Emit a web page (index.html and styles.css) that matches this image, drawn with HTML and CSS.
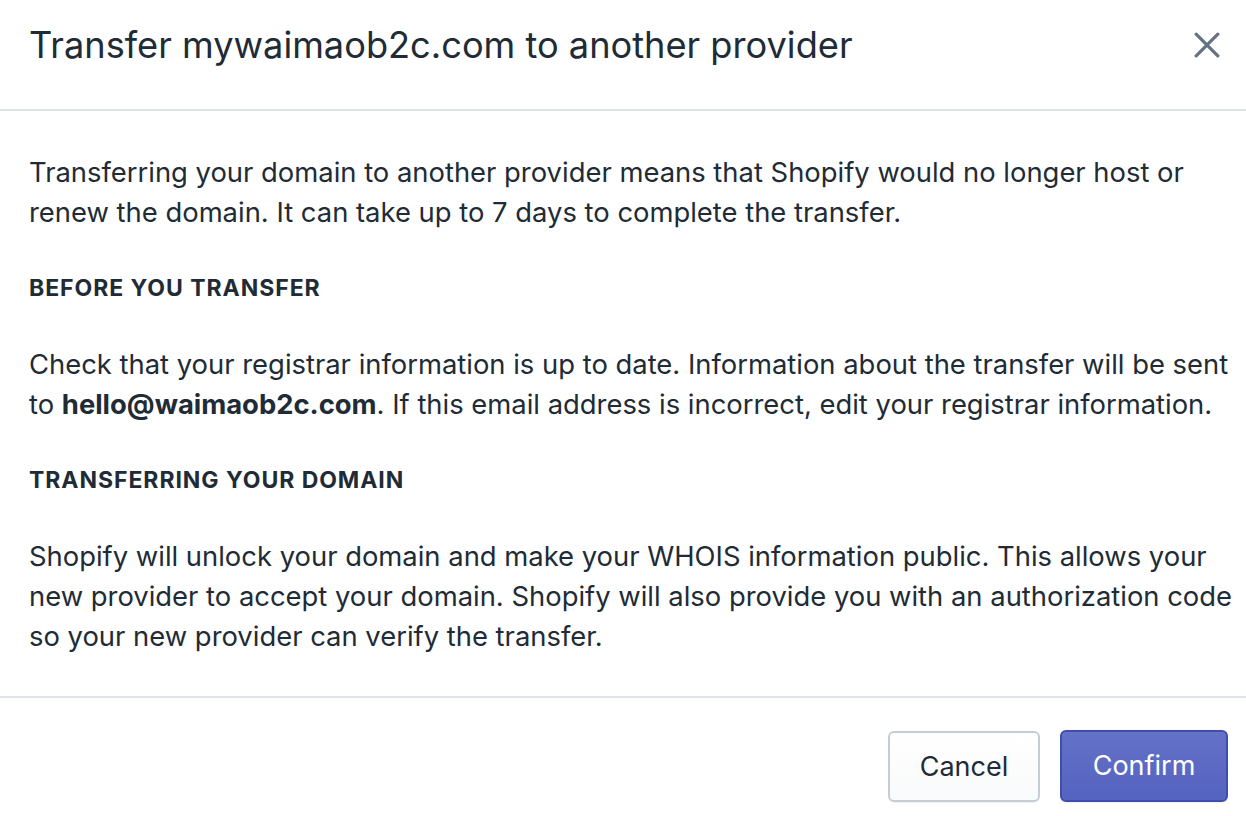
FILE: index.html
```html
<!DOCTYPE html>
<html lang="en">
<head>
<meta charset="utf-8">
<title>Transfer domain</title>
<link rel="stylesheet" href="styles.css">
</head>
<body>
<div class="modal">
  <header class="modal-header">
    <h1 class="modal-title">Transfer mywaimaob2c.com to another provider</h1>
    <button class="close" aria-label="Close">
      <svg viewBox="0 0 24 24" width="26" height="26"><path d="M2 2 L22 22 M22 2 L2 22" stroke="#637381" stroke-width="3" stroke-linecap="round" fill="none"/></svg>
    </button>
  </header>
  <section class="modal-body">
    <p class="text">Transferring your domain to another provider means that Shopify would no longer host or renew the domain. It can take up to 7 days to complete the transfer.</p>
    <h2 class="subheading">BEFORE YOU TRANSFER</h2>
    <p class="text">Check that your registrar information is up to date. Information about the transfer will be sent to <strong>hello@waimaob2c.com</strong>. If this email address is incorrect, edit your registrar information.</p>
    <h2 class="subheading">TRANSFERRING YOUR DOMAIN</h2>
    <p class="text">Shopify will unlock your domain and make your WHOIS information public. This allows your new provider to accept your domain. Shopify will also provide you with an authorization code so your new provider can verify the transfer.</p>
  </section>
  <footer class="modal-footer">
    <button class="btn btn-secondary">Cancel</button>
    <button class="btn btn-primary">Confirm</button>
  </footer>
</div>
</body>
</html>
```
FILE: styles.css
```css
html, body {
  margin: 0;
  padding: 0;
  background: #ffffff;
}
body {
  font-family: Inter, "Noto Sans", "Liberation Sans", sans-serif;
  color: #212b36;
  width: 1246px;
  height: 816px;
  overflow: hidden;
}
.modal {
  display: flex;
  flex-direction: column;
}
.modal-header {
  height: 109px;
  display: flex;
  align-items: center;
  justify-content: space-between;
  padding: 0 26px 0 29px;
  border-bottom: 2px solid #dfe3e8;
}
.modal-title {
  margin: 0;
  font-size: 36.2px;
  font-weight: 400;
  line-height: 40px;
  color: #212b36;
  padding-bottom: 20px;
}
.close {
  border: 0;
  background: transparent;
  padding: 0;
  width: 26px;
  height: 26px;
  margin-bottom: 19px;
  display: flex;
}
.modal-body {
  padding: 41px 4px 40px 29px;
  border-bottom: 2px solid #dfe3e8;
}
.text {
  margin: 0;
  font-size: 27.4px;
  line-height: 40px;
  color: #212b36;
}
.text strong {
  font-weight: 700;
}
.subheading {
  margin: 36px 0;
  font-size: 23px;
  line-height: 40px;
  font-weight: 700;
  letter-spacing: 0.95px;
  color: #212b36;
}
.modal-footer {
  display: flex;
  justify-content: flex-end;
  gap: 20px;
  padding: 33px 18px 0 0;
}
.btn {
  font-family: Inter, "Noto Sans", "Liberation Sans", sans-serif;
  font-size: 27px;
  line-height: 32px;
  border-radius: 6px;
  cursor: pointer;
}
.btn-secondary {
  width: 152px;
  height: 71px;
  color: #212b36;
  background: linear-gradient(to bottom, #ffffff, #f9fafb);
  border: 2px solid #c4cdd5;
  box-shadow: 0 1px 0 rgba(22, 29, 37, 0.05);
}
.btn-primary {
  width: 168px;
  height: 72px;
  margin-top: -1px;
  color: #ffffff;
  background: linear-gradient(to bottom, #6371c7, #5563c1);
  border: 2px solid #3f4eae;
  box-shadow: inset 0 1px 0 0 #6774c8, 0 1px 0 0 rgba(22, 29, 37, 0.05);
}
```
